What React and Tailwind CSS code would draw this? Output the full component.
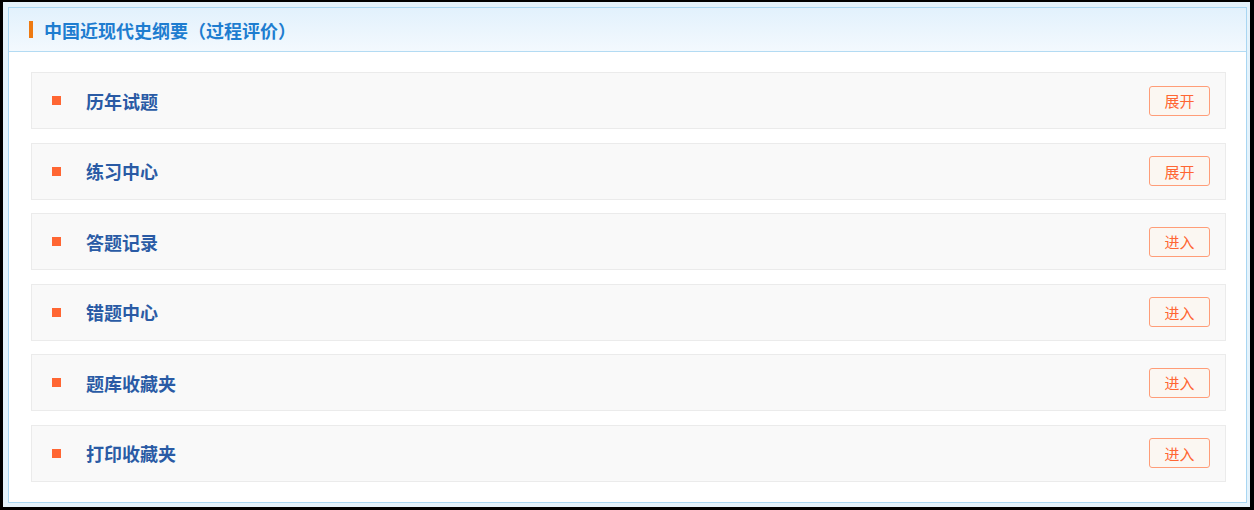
import React from 'react'

const rows = [
  { title: '历年试题', action: '展开' },
  { title: '练习中心', action: '展开' },
  { title: '答题记录', action: '进入' },
  { title: '错题中心', action: '进入' },
  { title: '题库收藏夹', action: '进入' },
  { title: '打印收藏夹', action: '进入' },
]

export default function App() {
  return (
    <div
      className="w-[1254px] h-[510px] bg-black pl-[3px] pt-[2px] pr-[4px] pb-[3px]"
      style={{ fontFamily: '"Noto Sans CJK SC", "Noto Sans", sans-serif' }}
    >
      <div className="h-full bg-[#e4f2fb] pl-[5px] pt-[5px] pr-[3px] pb-[4px]">
        <div className="h-full bg-white border border-[#a9d6f2] flex flex-col">
          {/* Header */}
          <div className="h-[44px] bg-gradient-to-b from-[#e2f1fc] to-[#f3f9fe] border-b border-[#b3dbf3] flex items-center pl-[20px]">
            <div className="w-[4px] h-[17px] bg-[#ee7a12] mr-[11px]" />
            <h1 className="text-[18px] font-bold text-[#1e7dd0] leading-none">
              中国近现代史纲要（过程评价）
            </h1>
          </div>

          {/* List */}
          <div className="flex flex-col gap-[13.6px] pl-[22px] pr-[20px] pt-[20px]">
            {rows.map(row => (
              <div
                key={row.title}
                className="h-[57px] bg-[#f9f9f9] border border-[#ebebeb] flex items-center pl-[20px] pr-[15px]"
              >
                <span className="w-[9px] h-[9px] bg-[#ff6633]" />
                <span className="ml-[25px] text-[18px] font-bold text-[#2a5ba5] leading-none">{row.title}</span>
                <button className="ml-auto w-[61px] h-[30px] border border-[#ff9d78] rounded-[3px] bg-[#fbf7f2] text-[#ff6633] text-[15px] leading-none">
                  {row.action}
                </button>
              </div>
            ))}
          </div>
        </div>
      </div>
    </div>
  )
}
